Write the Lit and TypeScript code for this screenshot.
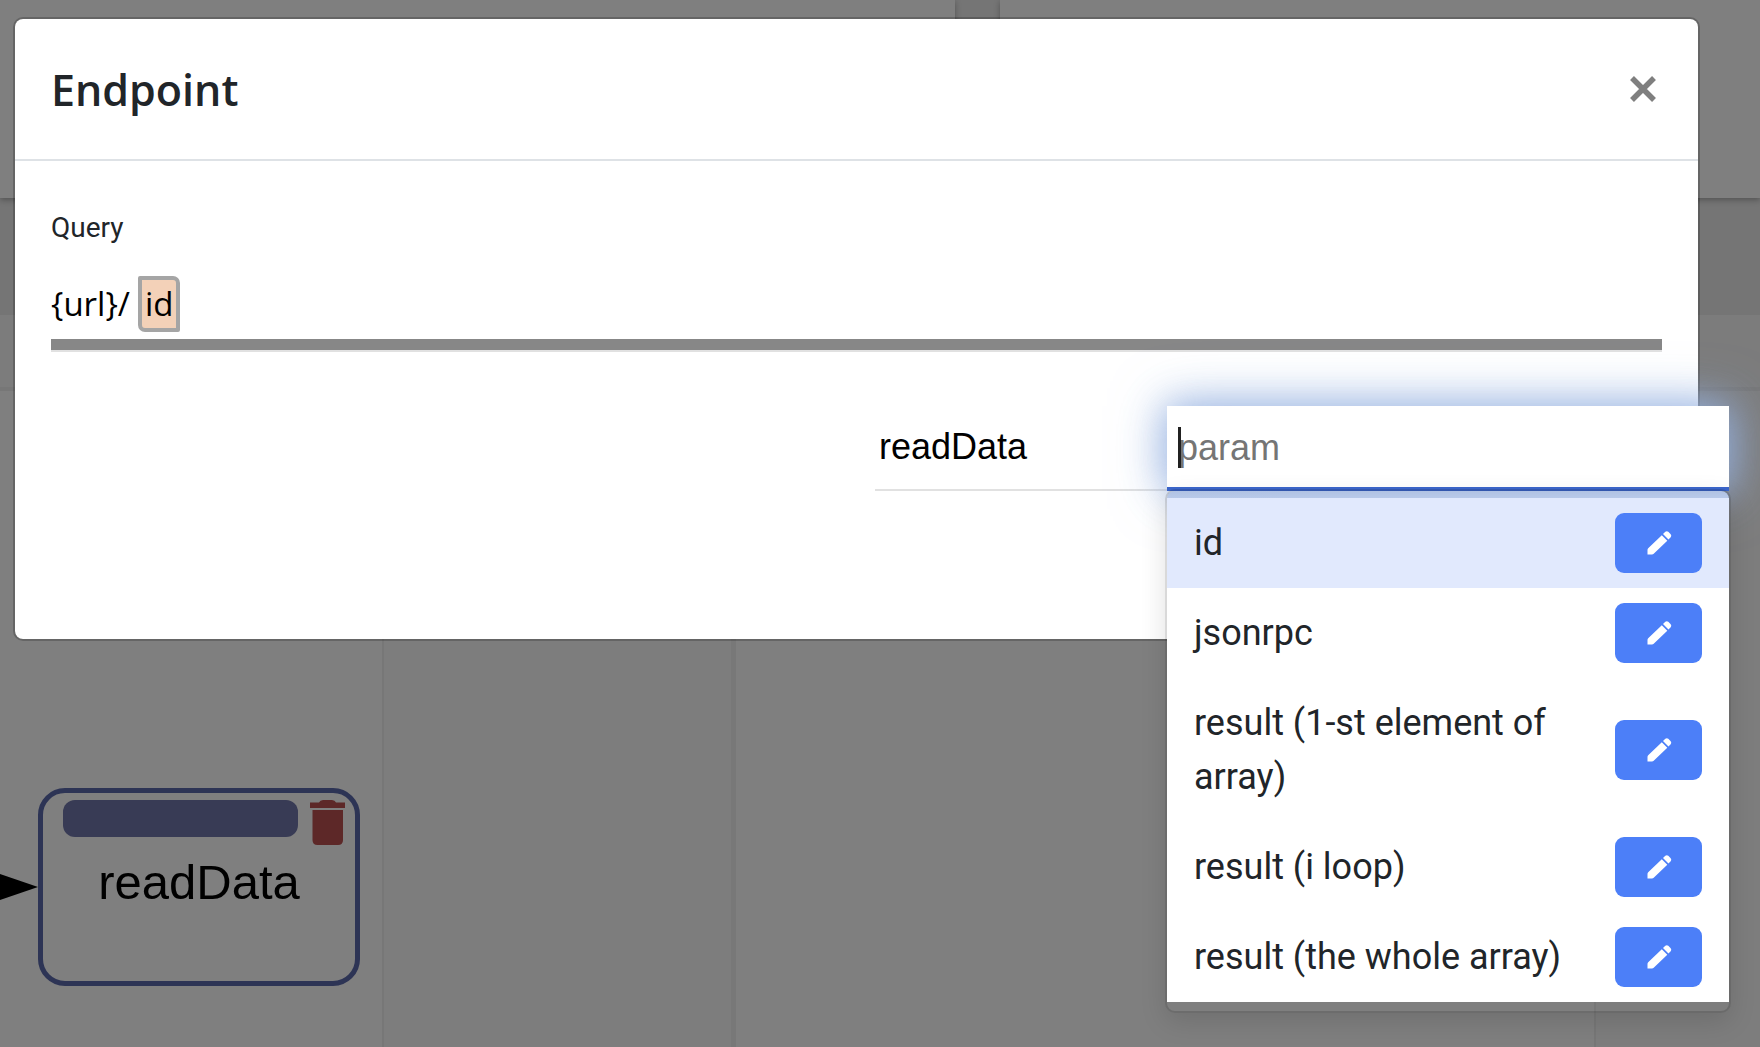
import { LitElement, html, css } from "lit";
import { customElement, state } from "lit/decorators.js";
import { classMap } from "lit/directives/class-map.js";

/** Dimmed workspace that sits behind the dialog. */
@customElement("flow-board")
export class FlowBoard extends LitElement {
  static styles = css`
    :host {
      display: flex;
      flex-direction: column;
      background: #757575;
      font-family: "Liberation Sans", Arial, sans-serif;
    }
    .cards {
      display: grid;
      grid-template-columns: 955fr 760fr;
      column-gap: 45px;
      height: 198px;
      margin-bottom: 117px;
    }
    .card {
      background: #7f7f7f;
      box-shadow: 0 2px 6px rgba(0, 0, 0, 0.3);
    }
    .table {
      flex: 1;
      display: flex;
      flex-direction: column;
      background: #7f7f7f;
    }
    .head {
      height: 72px;
      background: #7c7c7c;
      border-bottom: 4px solid #777777;
    }
    .columns {
      flex: 1;
      display: grid;
      grid-template-columns: 384fr 352fr 860fr 164fr;
    }
    .column {
      border-right: 2px solid #777777;
    }
    .column.shade {
      background: #7d7d7d;
    }
    .column.wide {
      border-right: 5px solid #787878;
    }
    .column.last {
      border-right: 0;
    }
    .arrow {
      position: absolute;
      left: 0;
      top: 873px;
      width: 38px;
      height: 28px;
    }
    .node {
      position: absolute;
      left: 38px;
      top: 788px;
      width: 322px;
      height: 198px;
      box-sizing: border-box;
      border: 5px solid #2d3455;
      border-radius: 27px;
      padding: 7px 10px 0 20px;
    }
    .tools {
      display: flex;
      justify-content: space-between;
    }
    .handle {
      width: 235px;
      height: 37px;
      border-radius: 12px;
      background: #383b55;
    }
    .trash {
      border: 0;
      padding: 0;
      background: none;
      height: 45px;
    }
    .trash svg {
      display: block;
      width: 35px;
      height: 45px;
      fill: #5d2828;
    }
    .name {
      margin: 9px 10px 0 0;
      text-align: center;
      font-size: 49px;
      line-height: 56px;
      color: #000;
    }
  `;

  render() {
    return html`
      <div class="cards">
        <div class="card"></div>
        <div class="card"></div>
      </div>
      <div class="table">
        <div class="head"></div>
        <div class="columns">
          <div class="column"></div>
          <div class="column shade wide"></div>
          <div class="column"></div>
          <div class="column shade last"></div>
        </div>
      </div>
      <svg class="arrow" viewBox="0 0 38 28" aria-hidden="true">
        <path d="M0 1 38 14 0 27z" fill="#000" />
      </svg>
      <div class="node">
        <div class="tools">
          <div class="handle"></div>
          <button class="trash" aria-label="Delete node">
            <svg viewBox="0 0 35 45" aria-hidden="true">
              <path d="M0 2.500h9Q10 0 13 0h9q3 0 4 2.500h9V8H0z" />
              <path d="M2.500 10h30.500v30q0 5-5 5H7.500q-5 0-5-5z" />
            </svg>
          </button>
        </div>
        <div class="name">readData</div>
      </div>
    `;
  }
}

interface Option {
  label: string;
}

/** Text box with its list of suggested parameters. */
@customElement("param-picker")
export class ParamPicker extends LitElement {
  @state() private active = 0;

  private options: Option[] = [
    { label: "id" },
    { label: "jsonrpc" },
    { label: "result (1-st element of array)" },
    { label: "result (i loop)" },
    { label: "result (the whole array)" },
  ];

  static styles = css`
    :host {
      display: block;
      position: relative;
    }
    .box {
      display: block;
      width: 100%;
      height: 85px;
      box-sizing: border-box;
      margin: 0;
      padding: 2px 11px 0;
      border: 0;
      border-bottom: 4px solid #3b66cc;
      border-radius: 0;
      outline: 0;
      background: #fff;
      color: #212529;
      caret-color: transparent;
      font: 36px "Liberation Sans", Arial, sans-serif;
      box-shadow:
        0 0 36px rgba(150, 178, 225, 0.8),
        0 0 54px rgba(150, 178, 225, 0.7);
    }
    .box::placeholder {
      color: #757575;
      opacity: 1;
    }
    .caret {
      position: absolute;
      left: 11px;
      top: 21px;
      width: 3px;
      height: 41px;
      background: #212121;
    }
    .menu {
      position: absolute;
      left: -2px;
      right: -2px;
      top: 83px;
      margin: 0;
      padding: 7px 0 9px;
      list-style: none;
      border: 2px solid rgba(0, 0, 0, 0.15);
      border-radius: 10px;
      background: linear-gradient(#b0c2e3, #b8c9e9) 0 0 / 100% 7px no-repeat;
      background-clip: padding-box;
      box-shadow: 0 9px 27px rgba(0, 0, 0, 0.12);
    }
    .option {
      display: flex;
      align-items: center;
      justify-content: space-between;
      gap: 27px;
      padding: 15px 27px;
      background: #fff;
      color: #212529;
      font: 36px/54px Roboto, sans-serif;
    }
    .option.active {
      background: #e1e9fd;
    }
    .label {
      padding: 3px 0;
    }
    .edit {
      flex: none;
      display: flex;
      align-items: center;
      justify-content: center;
      width: 87px;
      height: 60px;
      padding: 0;
      border: 0;
      border-radius: 9px;
      background: #4c7ff8;
    }
    .edit svg {
      width: 38px;
      height: 38px;
      fill: #fff;
    }
  `;

  render() {
    return html`
      <input class="box" type="text" placeholder="param" aria-label="param" />
      <span class="caret"></span>
      <ul class="menu">
        ${this.options.map(
          (option, i) => html`
            <li
              class=${classMap({ option: true, active: i === this.active })}
              @mouseenter=${() => (this.active = i)}
            >
              <span class="label">${option.label}</span>
              <button class="edit" aria-label="Edit ${option.label}">
                <svg viewBox="0 0 38 38" aria-hidden="true">
                  <path
                    d="M7.500 30.500v-4.500q0-1 .7-1.700L21.800 11.200l5.500 5.500L13.700 29.800q-.7.700-1.700.700zM23 10l2.300-2.200q1.500-1.200 3 0l2.400 2.400q1.200 1.500 0 3L28.500 15.500z"
                  />
                </svg>
              </button>
            </li>
          `,
        )}
      </ul>
    `;
  }
}

@customElement("app-root")
export class AppRoot extends LitElement {
  static styles = css`
    :host {
      display: block;
      position: relative;
      box-sizing: border-box;
      min-height: 100vh;
      padding: 17px 60px 34px 13px;
      overflow: hidden;
    }
    .board {
      position: absolute;
      inset: 0;
    }
    .dialog {
      position: relative;
      border: 2px solid rgba(0, 0, 0, 0.2);
      border-radius: 10px;
      background: #fff;
      background-clip: padding-box;
    }
    .header {
      display: flex;
      align-items: center;
      justify-content: space-between;
      height: 140px;
      padding: 0 36px;
      border-bottom: 2px solid #dee2e6;
    }
    .title {
      margin: 0;
      padding-top: 2px;
      color: #212529;
      font: 600 43px/68px "Open Sans", "Noto Sans", sans-serif;
    }
    .close {
      padding: 6px;
      border: 0;
      background: none;
    }
    .close svg {
      display: block;
      width: 26px;
      height: 26px;
    }
    .body {
      padding: 46px 36px 148px;
    }
    .caption {
      color: #212529;
      font: 28px/42px Roboto, sans-serif;
    }
    .query {
      display: flex;
      align-items: center;
      gap: 8px;
      margin-top: 27px;
      padding-bottom: 7px;
      border-bottom: 11px solid #878787;
      color: #000;
      font: 33px/48px "Open Sans", "Noto Sans", sans-serif;
    }
    .token {
      padding: 0 3px;
      border: 4px solid #a5a5a5;
      border-radius: 2px 7px;
      background: #f3d1b8;
    }
    .rule {
      height: 2px;
      background: #e1e1e1;
    }
    .row {
      display: flex;
      justify-content: flex-end;
      margin: 54px -67px 0 0;
    }
    .source {
      width: 292px;
      height: 85px;
      box-sizing: border-box;
      padding-left: 4px;
      border-bottom: 2px solid #e1e1e1;
      color: #000;
      font: 36px/82px "Liberation Sans", Arial, sans-serif;
    }
    .picker {
      width: 562px;
    }
  `;

  render() {
    return html`
      <flow-board class="board"></flow-board>
      <div class="dialog" role="dialog" aria-labelledby="title">
        <div class="header">
          <h1 class="title" id="title">Endpoint</h1>
          <button class="close" aria-label="Close">
            <svg viewBox="0 0 26 26" aria-hidden="true">
              <path d="M2 2 24 24M24 2 2 24" stroke="#7f7f7f" stroke-width="5.500" />
            </svg>
          </button>
        </div>
        <div class="body">
          <div class="caption">Query</div>
          <div class="query"><span>{url}/</span><span class="token">id</span></div>
          <div class="rule"></div>
          <div class="row">
            <div class="source">readData</div>
            <param-picker class="picker"></param-picker>
          </div>
        </div>
      </div>
    `;
  }
}
